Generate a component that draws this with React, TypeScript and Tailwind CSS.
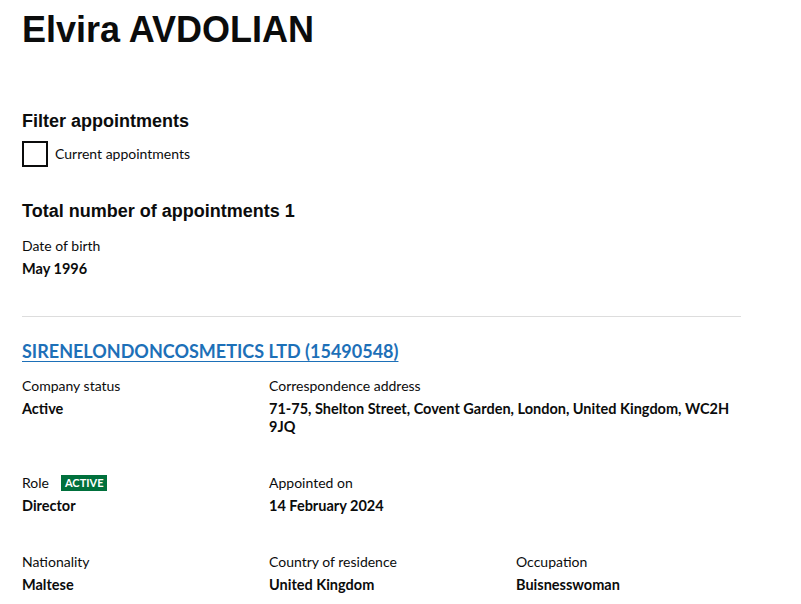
import React from "react";

const bodyFont = { fontFamily: "Lato, Roboto, 'Liberation Sans', sans-serif" };

const Field = ({
  label,
  value,
  badge,
  className = "",
  valueClass = "",
}: {
  label: string;
  value: React.ReactNode;
  badge?: string;
  className?: string;
  valueClass?: string;
}) => (
  <div className={className}>
    <div className="flex items-center text-[14px] leading-[22px] text-[#0b0c0c]">
      <span>{label}</span>
      {badge && (
        <span className="ml-[12px] bg-[#00703c] px-[4px] h-[16px] flex items-center text-[11px] font-bold text-white">
          {badge}
        </span>
      )}
    </div>
    <div className={`mt-[3px] text-[14.5px] leading-[18px] font-bold text-[#0b0c0c] ${valueClass}`}>
      {value}
    </div>
  </div>
);

const App = () => {
  return (
    <div className="min-h-screen bg-white text-[#0b0c0c]" style={bodyFont}>
      <div className="px-[22px] w-[763px]">
        {/* Name */}
        <h1 className="mt-[10px] text-[36px] leading-[40px] font-bold font-['Liberation_Sans',Arial,sans-serif]">
          Elvira AVDOLIAN
        </h1>

        {/* Filter */}
        <h2 className="mt-[59px] text-[18px] leading-[24px] font-bold font-['Liberation_Sans',Arial,sans-serif]">
          Filter appointments
        </h2>
        <label className="mt-[8px] flex items-center gap-[7px]">
          <span className="w-[26px] h-[26px] border-2 border-[#0b0c0c] bg-white" />
          <span className="text-[14px] leading-[20px]">Current appointments</span>
        </label>

        <h2 className="mt-[32px] text-[18px] leading-[24px] font-bold font-['Liberation_Sans',Arial,sans-serif]">
          Total number of appointments 1
        </h2>

        <Field className="mt-[12px]" label="Date of birth" value="May 1996" />

        <hr className="mt-[38px] border-0 border-t border-[#dddddd]" />

        {/* Appointment */}
        <div className="mt-[22px]">
          <a
            href="#"
            className="block text-[18px] leading-[24px] font-bold text-[#1d70b8] underline underline-offset-[3px] decoration-[1px]"
          >
            SIRENELONDONCOSMETICS LTD (15490548)
          </a>

          <div className="mt-[12px] grid grid-cols-[247px_247px_225px] gap-y-[36px]">
            <Field label="Company status" value="Active" />
            <Field
              className="col-span-2"
              valueClass="max-w-[462px]"
              label="Correspondence address"
              value="71-75, Shelton Street, Covent Garden, London, United Kingdom, WC2H 9JQ"
            />
            <Field label="Role" badge="ACTIVE" value="Director" />
            <Field className="col-span-2" label="Appointed on" value="14 February 2024" />
            <Field label="Nationality" value="Maltese" />
            <Field label="Country of residence" value="United Kingdom" />
            <Field label="Occupation" value="Buisnesswoman" />
          </div>
        </div>
      </div>
    </div>
  );
};

export default App;
